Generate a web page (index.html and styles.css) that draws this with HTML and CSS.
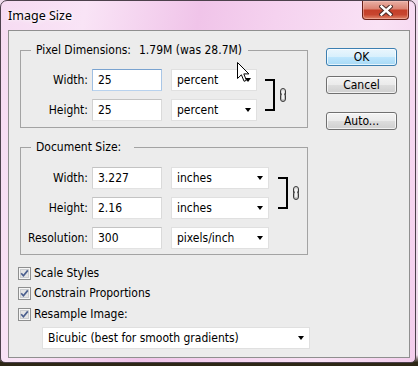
FILE: index.html
```html
<!DOCTYPE html>
<html>
<head>
<meta charset="utf-8">
<title>Image Size</title>
<link rel="stylesheet" href="styles.css">
</head>
<body>
<div class="window">
  <div class="titlebar">
    <span class="title">Image Size</span>
    <div class="close">
      <svg width="14" height="11" viewBox="0 0 14 11"><path d="M2.5 1.5 L11.5 9.5 M11.5 1.5 L2.5 9.5" stroke="#4a2a26" stroke-width="4.4" stroke-linecap="square"/><path d="M2.5 1.5 L11.5 9.5 M11.5 1.5 L2.5 9.5" stroke="#fff" stroke-width="2.4" stroke-linecap="square"/></svg>
    </div>
  </div>
  <div class="client">
    <div class="main">
      <fieldset class="group group-pixel">
        <legend class="legend">Pixel Dimensions:<span class="size">1.79M (was 28.7M)</span></legend>
        <div class="grid grid-pixel">
          <span class="lbl">Width:</span>
          <input class="field field-focus" type="text" value="25">
          <div class="dd">percent<i class="arrow"></i></div>
          <div class="link">
            <span class="bracket"></span>
            <svg class="chain" width="8" height="14" viewBox="0 0 8 14"><rect x="1.5" y="0.5" width="5" height="8" rx="2.5" fill="#d6d6d6" stroke="#3a3a3a"/><rect x="1.5" y="5.5" width="5" height="8" rx="2.5" fill="#bdbdbd" stroke="#3a3a3a"/><rect x="3" y="2.5" width="2" height="9" rx="1" fill="#f2f2f2"/></svg>
          </div>
          <span class="lbl">Height:</span>
          <input class="field" type="text" value="25">
          <div class="dd">percent<i class="arrow"></i></div>
        </div>
      </fieldset>

      <fieldset class="group group-doc">
        <legend class="legend legend-doc">Document Size:</legend>
        <div class="grid grid-doc">
          <span class="lbl">Width:</span>
          <input class="field" type="text" value="3.227">
          <div class="dd dd-wide">inches<i class="arrow"></i></div>
          <div class="link">
            <span class="bracket"></span>
            <svg class="chain" width="8" height="14" viewBox="0 0 8 14"><rect x="1.5" y="0.5" width="5" height="8" rx="2.5" fill="#d6d6d6" stroke="#3a3a3a"/><rect x="1.5" y="5.5" width="5" height="8" rx="2.5" fill="#bdbdbd" stroke="#3a3a3a"/><rect x="3" y="2.5" width="2" height="9" rx="1" fill="#f2f2f2"/></svg>
          </div>
          <span class="lbl">Height:</span>
          <input class="field" type="text" value="2.16">
          <div class="dd dd-wide">inches<i class="arrow"></i></div>
          <span class="lbl">Resolution:</span>
          <input class="field" type="text" value="300">
          <div class="dd dd-wide">pixels/inch<i class="arrow"></i></div>
        </div>
      </fieldset>

      <div class="checks">
        <label class="check"><svg class="box" width="13" height="13" viewBox="0 0 13 13"><rect x="0.5" y="0.5" width="12" height="12" fill="#f6f6f6" stroke="#8e8f8f"/><rect x="2.5" y="2.5" width="8" height="8" fill="#e4e4e4" stroke="#cbcdd0"/><path d="M3.2 6.3 L5.4 8.8 L9.8 3.4" stroke="#4b5f8e" stroke-width="1.7" fill="none"/></svg>Scale Styles</label>
        <label class="check"><svg class="box" width="13" height="13" viewBox="0 0 13 13"><rect x="0.5" y="0.5" width="12" height="12" fill="#f6f6f6" stroke="#8e8f8f"/><rect x="2.5" y="2.5" width="8" height="8" fill="#e4e4e4" stroke="#cbcdd0"/><path d="M3.2 6.3 L5.4 8.8 L9.8 3.4" stroke="#4b5f8e" stroke-width="1.7" fill="none"/></svg>Constrain Proportions</label>
        <label class="check"><svg class="box" width="13" height="13" viewBox="0 0 13 13"><rect x="0.5" y="0.5" width="12" height="12" fill="#f6f6f6" stroke="#8e8f8f"/><rect x="2.5" y="2.5" width="8" height="8" fill="#e4e4e4" stroke="#cbcdd0"/><path d="M3.2 6.3 L5.4 8.8 L9.8 3.4" stroke="#4b5f8e" stroke-width="1.7" fill="none"/></svg>Resample Image:</label>
      </div>
      <div class="dd dd-resample">Bicubic (best for smooth gradients)<i class="arrow"></i></div>
    </div>

    <div class="buttons">
      <button class="btn btn-default">OK</button>
      <button class="btn btn-cancel">Cancel</button>
      <button class="btn btn-auto">Auto...</button>
    </div>
  </div>

  <svg class="cursor" width="13" height="21" viewBox="0 0 13 21"><path d="M0.5 0.5 V16.5 L4.4 12.8 L7.1 19.3 L9.4 18.3 L6.8 11.9 H11.9 Z" fill="#fff" stroke="#000"/></svg>
</div>
</body>
</html>
```

FILE: styles.css
```css
* { box-sizing: border-box; }

html, body { margin: 0; padding: 0; }

body {
  width: 418px;
  height: 366px;
  overflow: hidden;
  background: linear-gradient(to bottom, #efdcec 0%, #efdcec 97%, #2e2716 99%);
  font-family: "DejaVu Sans Condensed", "DejaVu Sans", sans-serif;
  font-size: 12px;
  color: #000;
}

.window {
  position: relative;
  width: 416px;
  height: 363px;
  border: 1px solid #4d414c;
  border-radius: 7px 7px 5px 5px;
  background: linear-gradient(100deg, #f6dbf2 0%, #f9e4f6 18%, #f0c4e9 42%, #f5d2ef 58%, #f9e2f5 80%, #f3cdec 100%);
  padding: 0 5px 4px 7px;
  display: flex;
  flex-direction: column;
}

.titlebar {
  flex: none;
  height: 29px;
  display: flex;
  justify-content: space-between;
  align-items: flex-start;
}

.title {
  font-family: "Noto Sans", "Open Sans", sans-serif;
  font-size: 12.5px;
  line-height: 16px;
  margin-top: 7px;
  color: #000;
  text-shadow: 0 0 6px #fff, 0 0 3px #fff;
}

.close {
  width: 47px;
  height: 19px;
  margin-right: 1px;
  border: 1px solid #6a2219;
  border-top: none;
  border-radius: 0 0 4px 4px;
  background: linear-gradient(#e9b0a5 0%, #dc8574 42%, #c53f29 52%, #c7452f 75%, #e0856a 100%);
  box-shadow: inset 0 0 0 1px rgba(255, 205, 195, 0.45);
  display: flex;
  align-items: center;
  justify-content: center;
}

.client {
  flex: 1;
  background: #ececec;
  border: 1px solid #8f8f8f;
  display: flex;
  padding-left: 9px;
}

.main {
  width: 292px;
  display: flex;
  flex-direction: column;
  padding-top: 12px;
}

.group {
  margin: 0 0 0 2px;
  width: 288px;
  min-inline-size: 0;
  border: 1px solid #a3a3a3;
  padding: 12px 0 6px 0;
}

.group-doc {
  margin-top: 12px;
  padding: 13px 0 5px 0;
}

.legend {
  margin-left: 10px;
  padding: 0 6px 0 5px;
  line-height: 14px;
}

.legend-doc { padding-right: 13px; }

.size { margin-left: 8px; }

.grid {
  display: grid;
  grid-auto-rows: 22px;
  row-gap: 8px;
}

.grid-pixel { grid-template-columns: 71px 79px 94px auto; }
.grid-doc { grid-template-columns: 71px 79px 107px auto; }

.lbl {
  text-align: right;
  padding-right: 4px;
  line-height: 22px;
}

.field {
  width: 70px;
  height: 22px;
  margin: 0;
  padding: 0 5px;
  border: 1px solid;
  border-color: #c3c3c3 #dadada #e2e2e2 #d2d2d2;
  background: #fff;
  font-family: inherit;
  font-size: 12px;
  color: #000;
  outline: none;
}

.field-focus { border-color: #7aa3d0 #a9c6e6 #b8d2ee #a0bfe2; }

.dd {
  width: 86px;
  height: 22px;
  border: 1px solid #e0e0e0;
  background: #fff;
  padding: 0 5px;
  display: flex;
  align-items: center;
  justify-content: space-between;
  white-space: nowrap;
}

.dd-wide { width: 98px; }

.arrow {
  width: 0;
  height: 0;
  border-left: 3.5px solid transparent;
  border-right: 3.5px solid transparent;
  border-top: 4px solid #000;
}

.link {
  grid-column: 4;
  grid-row: 1 / span 2;
  display: flex;
  align-items: center;
}

.bracket {
  align-self: stretch;
  width: 10px;
  margin: 10px 0;
  border: 2px solid #000;
  border-left: none;
}

.chain { margin-left: 4px; }

.checks {
  margin-top: 8px;
  display: flex;
  flex-direction: column;
}

.check {
  height: 20px;
  display: flex;
  align-items: center;
  gap: 3px;
}

.check + .check + .check { margin-top: 1px; }

.box { flex: none; }

.dd-resample {
  width: 268px;
  margin: 3px 0 0 24px;
}

.buttons {
  margin: 17px 0 0 16px;
  display: flex;
  flex-direction: column;
  align-items: flex-start;
}

.btn {
  width: 71px;
  height: 18px;
  padding: 0;
  border: 1px solid #707070;
  border-radius: 3px;
  background: linear-gradient(#f3f3f3 0%, #ebebeb 48%, #dddddd 52%, #cfcfcf 100%);
  box-shadow: inset 0 0 0 1px rgba(255, 255, 255, 0.7);
  font-family: inherit;
  font-size: 12px;
  line-height: 16px;
  color: #000;
}

.btn-default {
  border-color: #3c7fb1;
  background: linear-gradient(#eaf6fd 0%, #d9f0fc 48%, #bee6fd 52%, #a7d9f5 100%);
}

.btn-cancel { margin-top: 10px; }
.btn-auto { margin-top: 18px; }

.cursor {
  position: absolute;
  left: 236px;
  top: 61px;
}
```
